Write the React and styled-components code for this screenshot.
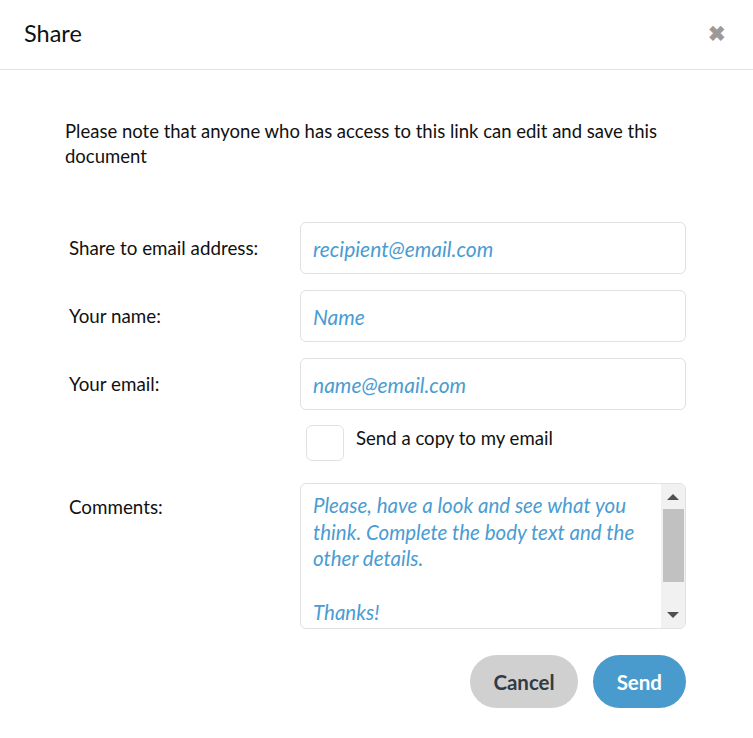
import React from 'react';
import styled, {createGlobalStyle} from "styled-components";

const GlobalStyle = createGlobalStyle`
	body {
		margin: 0;
		background: #fff;
		font-family: "Lato", "Open Sans", sans-serif;
		color: #1a1a1a;
	}
`

const Modal = styled.div`
	width: 753px;
	height: 738px;
	display: flex;
	flex-direction: column;
	background: #fff;
`

const Header = styled.div`
	height: 70px;
	box-sizing: border-box;
	display: flex;
	align-items: center;
	justify-content: space-between;
	padding: 0 24px 4px 24px;
	border-bottom: 1px solid #e2e2e2;
`

const Title = styled.h2`
	margin: 0;
	font-size: 23.5px;
	font-weight: 400;
	color: #111;
`

const Close = styled.span`
	font-size: 21px;
	font-weight: 700;
	color: #9a9a9a;
	margin-right: 3px;
`

const Body = styled.div`
	padding: 49px 67px 0 65px;
	display: flex;
	flex-direction: column;
`

const Note = styled.p`
	margin: 0 0 53px 0;
	font-size: 18.5px;
	line-height: 25px;
	color: #111;
`

const Form = styled.div`
	display: grid;
	grid-template-columns: 231px 386px;
	column-gap: 0;
	row-gap: 16px;
	padding-left: 4px;
`

const Label = styled.label`
	font-size: 18.8px;
	color: #111;
	padding-top: ${props => props.top || 14}px;
`

const Field = styled.div`
	height: 52px;
	box-sizing: border-box;
	border: 1px solid #e1e1e1;
	border-radius: 6px;
	display: flex;
	align-items: center;
	padding: 0 12px;
	font-size: 21px;
	font-style: italic;
	color: #4a9cd2;
`

const CheckRow = styled.div`
	display: flex;
	align-items: center;
	gap: 12px;
	padding-left: 6px;
	margin-top: -1px;
	margin-bottom: 6px;
`

const Box = styled.span`
	width: 38px;
	height: 36px;
	box-sizing: border-box;
	border: 1px solid #e1e1e1;
	border-radius: 6px;
`

const CheckText = styled.span`
	font-size: 18.6px;
	color: #111;
	margin-top: -11px;
`

const TextArea = styled.div`
	height: 146px;
	box-sizing: border-box;
	border: 1px solid #e1e1e1;
	border-radius: 6px;
	display: flex;
	overflow: hidden;
`

const TextContent = styled.div`
	flex: 1;
	padding: 8px 12px 0 12px;
	font-size: 20.5px;
	line-height: 26.7px;
	font-style: italic;
	color: #4a9cd2;
	overflow: hidden;
	white-space: pre-wrap;
`

const Scrollbar = styled.div`
	width: 24px;
	background: #f1f1f1;
	display: flex;
	flex-direction: column;
	align-items: center;
`

const Arrow = styled.span`
	width: 0;
	height: 0;
	border-left: 6px solid transparent;
	border-right: 6px solid transparent;
	${props => props.down ? "border-top: 6px solid #505050;" : "border-bottom: 6px solid #505050;"}
	margin: ${props => props.down ? "9px 0 10px" : "10px 0 9px"};
`

const Track = styled.div`
	flex: 1;
	width: 100%;
	display: flex;
	justify-content: center;
`

const Thumb = styled.div`
	width: 21px;
	height: 73px;
	background: #c1c1c1;
`

const Footer = styled.div`
	display: flex;
	justify-content: flex-end;
	gap: 15px;
	padding: 26px 67px 0 0;
`

const Button = styled.button`
	height: 53px;
	padding: 0 ${props => props.primary ? 24 : 23}px;
	border: none;
	border-radius: 27px;
	font-family: inherit;
	font-size: 20.5px;
	font-weight: 700;
	background: ${props => props.primary ? "#4a9bcd" : "#d0d0d0"};
	color: ${props => props.primary ? "#fff" : "#333a44"};
`

const App = () => {
	return (
		<React.Fragment>
			<GlobalStyle/>
			<Modal>
				<Header>
					<Title>Share</Title>
					<Close>✖</Close>
				</Header>
				<Body>
					<Note>Please note that anyone who has access to this link can edit and save this document</Note>
					<Form>
						<Label>Share to email address:</Label>
						<Field>recipient@email.com</Field>
						<Label>Your name:</Label>
						<Field>Name</Field>
						<Label>Your email:</Label>
						<Field>name@email.com</Field>
						<span/>
						<CheckRow>
							<Box/>
							<CheckText>Send a copy to my email</CheckText>
						</CheckRow>
						<Label top={12}>Comments:</Label>
						<TextArea>
							<TextContent>{"Please, have a look and see what you think. Complete the body text and the other details.\n\nThanks!"}</TextContent>
							<Scrollbar>
								<Arrow/>
								<Track><Thumb/></Track>
								<Arrow down/>
							</Scrollbar>
						</TextArea>
					</Form>
				</Body>
				<Footer>
					<Button>Cancel</Button>
					<Button primary>Send</Button>
				</Footer>
			</Modal>
		</React.Fragment>
	);
};

export default App
